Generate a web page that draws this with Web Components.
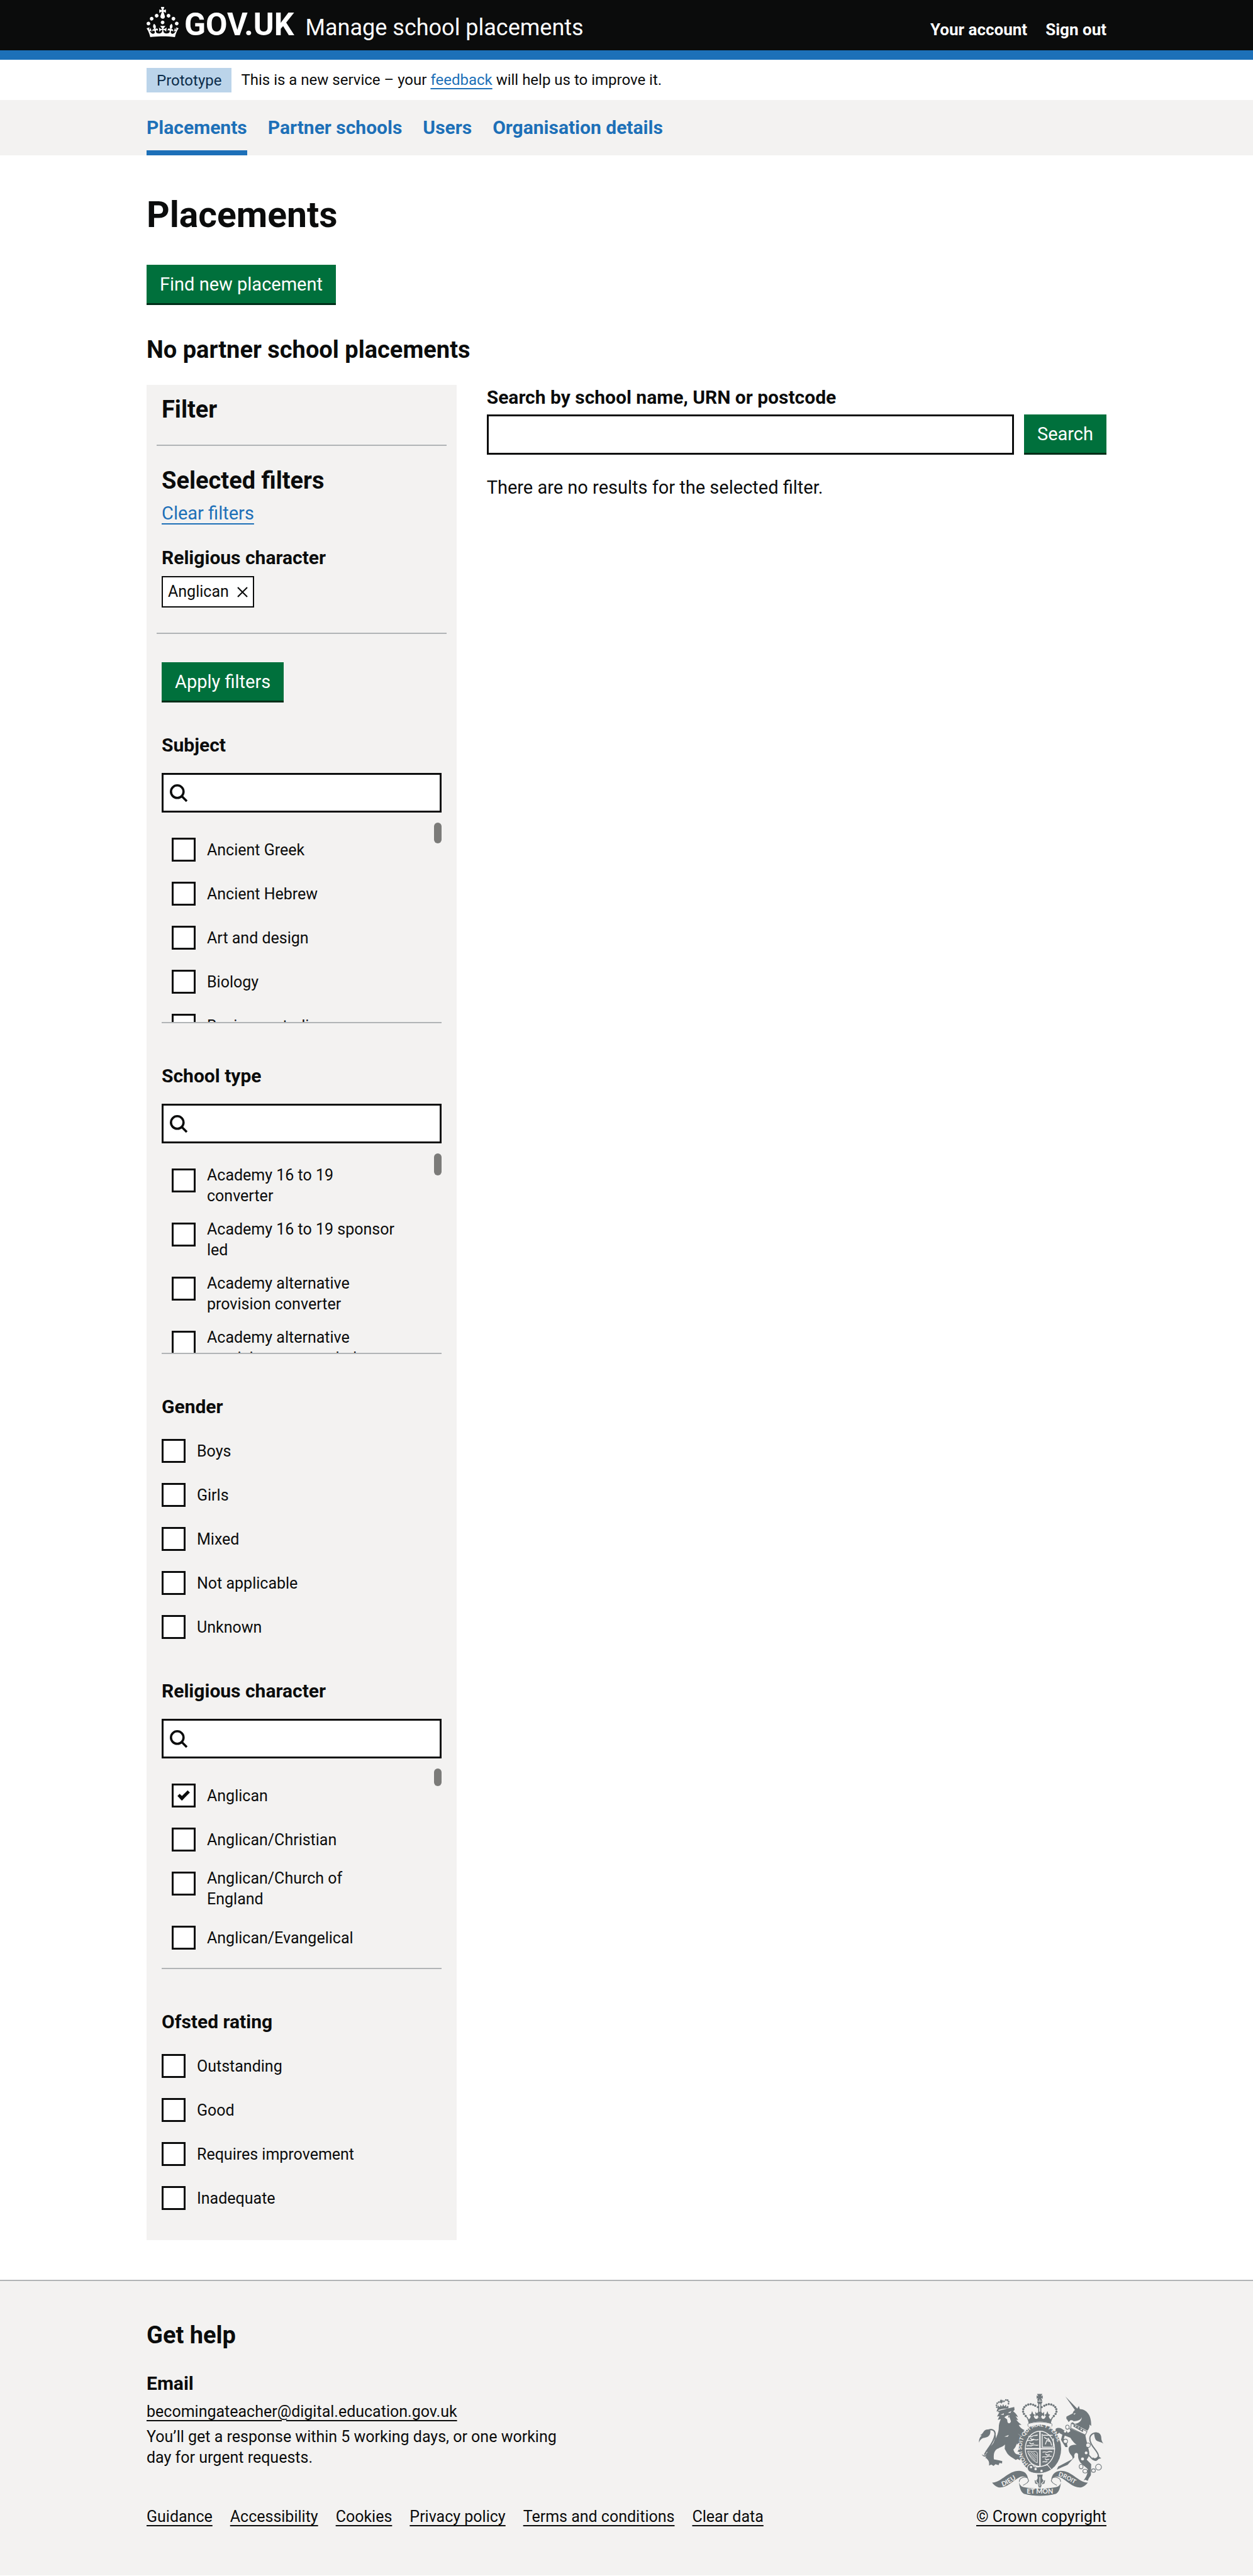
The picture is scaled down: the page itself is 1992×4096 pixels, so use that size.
<!DOCTYPE html>
<html lang="en">
<head>
<meta charset="utf-8">
<title>Placements - Manage school placements</title>
<meta name="viewport" content="width=device-width, initial-scale=1">
<style>
  :root {
    --ink: #0b0c0c;
    --blue: #1d70b8;
    --grey: #f3f2f1;
    --line: #b1b4b6;
    --small: 25px;
    --body: 29px;
    --strong: 30px;
    --heading: 38px;
    --page: min(1526px, 100% - 60px);
  }
  body {
    margin: 0;
    background: #fff;
    color: var(--ink);
    font-family: Roboto, "Liberation Sans", sans-serif;
    font-size: var(--body);
    line-height: 32px;
  }
</style>
</head>
<body>
<app-header service="Manage school placements">
  <header-link>Your account</header-link>
  <header-link>Sign out</header-link>
</app-header>
<phase-banner phase="Prototype"></phase-banner>
<primary-nav>
  <nav-link current>Placements</nav-link>
  <nav-link>Partner schools</nav-link>
  <nav-link>Users</nav-link>
  <nav-link>Organisation details</nav-link>
</primary-nav>
<placements-page>
  <filter-panel slot="filters">
    <filter-group name="Subject" search thumb="33">
      <check-item>Ancient Greek</check-item>
      <check-item>Ancient Hebrew</check-item>
      <check-item>Art and design</check-item>
      <check-item>Biology</check-item>
      <check-item>Business studies</check-item>
    </filter-group>
    <filter-group name="School type" search thumb="35">
      <check-item>Academy 16 to 19 converter</check-item>
      <check-item>Academy 16 to 19 sponsor led</check-item>
      <check-item>Academy alternative provision converter</check-item>
      <check-item>Academy alternative provision sponsor led</check-item>
    </filter-group>
    <filter-group name="Gender">
      <check-item>Boys</check-item>
      <check-item>Girls</check-item>
      <check-item>Mixed</check-item>
      <check-item>Not applicable</check-item>
      <check-item>Unknown</check-item>
    </filter-group>
    <filter-group name="Religious character" search thumb="28">
      <check-item checked>Anglican</check-item>
      <check-item>Anglican/Christian</check-item>
      <check-item>Anglican/Church of England</check-item>
      <check-item>Anglican/Evangelical</check-item>
    </filter-group>
    <filter-group name="Ofsted rating">
      <check-item>Outstanding</check-item>
      <check-item>Good</check-item>
      <check-item>Requires improvement</check-item>
      <check-item>Inadequate</check-item>
    </filter-group>
  </filter-panel>
  <search-results slot="results">There are no results for the selected filter.</search-results>
</placements-page>
<app-footer>
  <footer-link>Guidance</footer-link>
  <footer-link>Accessibility</footer-link>
  <footer-link>Cookies</footer-link>
  <footer-link>Privacy policy</footer-link>
  <footer-link>Terms and conditions</footer-link>
  <footer-link>Clear data</footer-link>
</app-footer>

<script>
const base = `*,*::before,*::after{box-sizing:border-box}h1,h2,h3,p{margin:0}`;
const define = (name, css, html) => customElements.define(name, class extends HTMLElement {
  constructor() {
    super();
    const root = this.attachShadow({ mode: 'open' });
    const t = document.createElement('template');
    t.innerHTML = `<style>${base}${css}</style>${typeof html === 'function' ? html(this) : html}`;
    root.append(t.content.cloneNode(true));
  }
});

/* Green action button */
define('action-button', `
  :host{display:inline-block}
  button{display:block;height:64px;padding:0 21px 3px;border:0;border-radius:0;background:#00703c;color:#fff;
    box-shadow:inset 0 -3px 0 #002d18;font:inherit;font-size:var(--body);line-height:32px;white-space:nowrap;cursor:pointer}
`, `<button type="button"><slot></slot></button>`);

define('crown-icon', `:host{display:block}svg{display:block}`, `
<svg width="51" height="48" viewBox="0 0 32 30" fill="#fff" aria-hidden="true"><path d="M22.6 10.4c-1 .4-2-.1-2.4-1-.4-.9.1-2 1-2.4.9-.4 2 .1 2.4 1s-.1 2-1 2.4m-5.9 6.7c-.9.4-2-.1-2.4-1-.4-.9.1-2 1-2.4.9-.4 2 .1 2.4 1s-.1 2-1 2.4m10.8-3.7c-1 .4-2-.1-2.4-1-.4-.9.1-2 1-2.4.9-.4 2 .1 2.4 1s0 2-1 2.4m3.3 4.8c-1 .4-2-.1-2.4-1-.4-.9.1-2 1-2.4.9-.4 2 .1 2.4 1s-.1 2-1 2.4M17 4.7l2.3 1.2V2.5l-2.3.7-.2-.2.9-3h-3.4l.9 3-.2.2c-.1.1-2.3-.7-2.3-.7v3.4L15 4.7c.1.1.1.2.2.2l-1.3 4c-.1.2-.1.4-.1.6 0 1.1.8 2 1.9 2.2h.7c1-.2 1.9-1.1 1.9-2.1 0-.2 0-.4-.1-.6l-1.3-4c-.1-.2 0-.2.1-.3m-7.6 5.7c.9.4 2-.1 2.4-1 .4-.9-.1-2-1-2.4-.9-.4-2 .1-2.4 1s0 2 1 2.4m-5 3c.9.4 2-.1 2.4-1 .4-.9-.1-2-1-2.4-.9-.4-2 .1-2.4 1s.1 2 1 2.4m-3.2 4.8c.9.4 2-.1 2.4-1 .4-.9-.1-2-1-2.4-.9-.4-2 .1-2.4 1s0 2 1 2.4m14.8 11c4.4 0 8.6.3 12.3.8 1.1-4.5 2.4-7 3.7-8.8l-2.5-.9c.2 1.3.3 1.9 0 2.7-.4-.4-.8-1.1-1.1-2.3l-1.2 4c.7-.5 1.3-.8 2-.9-1.1 2.5-2.6 3.1-3.5 3-1.1-.2-1.7-1.2-1.5-2.1.3-1.2 1.5-1.5 2.1-.1 1.1-2.3-.8-3-2-2.3 1.9-1.9 2.1-3.5.6-5.6-2.1 1.6-2.1 3.2-1.2 5.5-1.2-1.4-3.2-.6-2.5 1.6.9-1.4 2.1-.5 1.9.8-.2 1.1-1.7 2.1-3.5 1.9-2.7-.2-2.9-2.1-2.9-3.6.7-.1 1.9.5 2.9 1.9l.4-4.3c-1.1 1.1-2.1 1.4-3.2 1.4.4-1.2 2.1-3 2.1-3h-5.4s1.7 1.9 2.1 3c-1.1 0-2.1-.2-3.2-1.4l.4 4.3c1-1.4 2.2-2 2.9-1.9-.1 1.5-.2 3.4-2.9 3.6-1.9.2-3.4-.8-3.5-1.9-.2-1.3 1-2.2 1.9-.8.7-2.3-1.2-3-2.5-1.6.9-2.2.9-3.9-1.2-5.5-1.5 2-1.3 3.7.6 5.6-1.2-.7-3.1 0-2 2.3.6-1.4 1.8-1.1 2.1.1.2.9-.3 1.9-1.5 2.1-.9.2-2.4-.5-3.5-3 .6 0 1.2.3 2 .9l-1.2-4c-.3 1.1-.7 1.9-1.1 2.3-.3-.8-.2-1.4 0-2.7l-2.9.9C1.3 23 2.6 25.5 3.7 30c3.7-.5 7.9-.8 12.3-.8"/></svg>`);

define('header-link', `:host{display:block}a{color:inherit;text-decoration:none}`, `<a href="#"><slot></slot></a>`);

define('app-header', `
  :host{display:block;background:var(--ink);color:#fff;border-bottom:15px solid var(--blue)}
  .row{display:flex;align-items:baseline;width:var(--page);height:80px;margin:0 auto;padding-top:11px}
  crown-icon{align-self:flex-start;margin-right:9px}
  .logo{font-size:50px;line-height:56px;font-weight:700;color:inherit;text-decoration:none}
  .service{margin-left:18px;font-size:36px;color:inherit;text-decoration:none}
  nav{display:flex;gap:29px;margin-left:auto;font-size:26px;font-weight:700}
`, el => `<header class="row"><crown-icon></crown-icon><a class="logo" href="#">GOV.UK</a>
  <a class="service" href="#">${el.getAttribute('service')}</a><nav aria-label="Account"><slot></slot></nav></header>`);

define('phase-banner', `
  :host{display:block}
  .row{display:flex;align-items:center;gap:15px;width:var(--page);min-height:64px;margin:0 auto;font-size:24px}
  strong{padding:4px 16px 3px;background:#bbd4ea;color:#0c2d4a;font-weight:400}
  a{color:var(--blue);text-underline-offset:5px;text-decoration-thickness:2px}
`, el => `<div class="row"><strong>${el.getAttribute('phase')}</strong><p>This is a new service – your <a href="#">feedback</a> will help us to improve it.</p></div>`);

define('nav-link', `
  :host{display:block}
  a{display:block;padding:28px 0 20px;border-bottom:8px solid transparent;color:var(--blue);font-size:var(--strong);font-weight:700;text-decoration:none}
  :host([current]) a{border-color:var(--blue)}
`, `<a href="#"><slot></slot></a>`);

define('primary-nav', `
  :host{display:block;background:var(--grey)}
  nav{display:flex;gap:33px;width:var(--page);margin:0 auto}
`, `<nav aria-label="Primary"><slot></slot></nav>`);

define('placements-page', `
  :host{display:block;width:var(--page);margin:0 auto;padding:65px 0 63px}
  h1{font-size:57px;line-height:60px}
  action-button{display:block;width:max-content;margin:49px 0 51px}
  h2{font-size:var(--heading);line-height:40px}
  .columns{display:grid;grid-template-columns:1fr 2fr;gap:48px;align-items:start;margin-top:36px}
`, `<main><h1>Placements</h1><action-button>Find new placement</action-button><h2>No partner school placements</h2>
  <div class="columns"><slot name="filters"></slot><slot name="results"></slot></div></main>`);

define('filter-panel', `
  :host{display:block;padding:19px 16px 42px;background:var(--grey)}
  section,.groups{padding:0 8px}
  h2{font-size:var(--heading);line-height:40px}
  .title{padding-bottom:36px}
  .selected{padding-top:35px;padding-bottom:40px;border:solid var(--line);border-width:2px 0}
  .clear{display:block;width:max-content;margin:16px 0 39px;color:var(--blue);text-underline-offset:6px;text-decoration-thickness:2px}
  h3{font-size:var(--strong)}
  .tag{display:flex;align-items:center;gap:13px;height:50px;margin-top:13px;padding:0 8px;border:2px solid var(--ink);border-radius:0;
    background:#fff;color:var(--ink);font:inherit;font-size:var(--small);cursor:pointer}
  .groups{display:flex;flex-direction:column;padding-top:45px}
  action-button{align-self:flex-start;margin-bottom:52px}
`, `<section class="title"><h2>Filter</h2></section>
  <section class="selected"><h2>Selected filters</h2><a class="clear" href="#">Clear filters</a><h3>Religious character</h3>
  <button class="tag" type="button">Anglican<svg width="17" height="17" viewBox="0 0 17 17" fill="none" stroke="#0b0c0c" stroke-width="2.2" aria-hidden="true"><path d="M1 1l15 15M16 1L1 16"/></svg></button></section>
  <div class="groups"><action-button>Apply filters</action-button><slot></slot></div>`);

define('filter-group', `
  :host{display:block;margin-bottom:61px}
  :host([search]){margin-bottom:68px}
  :host(:last-child){margin-bottom:0}
  fieldset{min-width:0;margin:0;padding:0;border:0}
  legend{display:block;padding:0 0 29px;font-size:var(--strong);font-weight:700;line-height:32px}
  :host([search]) legend{padding-bottom:28px}
  .find{display:flex;align-items:center;height:63px;padding:0 10px;border:3px solid var(--ink);background:#fff}
  .find svg{flex:none;display:block}
  .find input{flex:1;min-width:0;height:57px;margin-left:8px;border:0;outline:0;background:none;font:inherit}
  .scroll{display:flex;height:319px;margin-top:16px;border-bottom:2px solid var(--line)}
  .list{display:flex;flex-direction:column;gap:20px}
  .scroll .list{flex:1;padding:18px 0 0 16px;overflow-y:auto;scrollbar-width:none}
  .thumb{flex:none;width:12px;border-radius:6px;background:#7b7b79}
`, el => {
  const name = el.getAttribute('name');
  const list = `<div class="list"><slot></slot></div>`;
  return `<fieldset><legend>${name}</legend>${el.hasAttribute('search') ? `
    <div class="find"><svg width="28" height="28" viewBox="0 0 28 28" fill="none" stroke="#0b0c0c" stroke-width="3.6" aria-hidden="true"><circle cx="11.8" cy="11.8" r="10"/><path d="M19 19l8 8"/></svg>
    <input type="search" aria-label="Search ${name}"></div>
    <div class="scroll">${list}<div class="thumb" style="height:${el.getAttribute('thumb')}px"></div></div>` : list}</fieldset>`;
});

define('check-item', `
  :host{display:flex;flex:none;align-items:flex-start;min-height:50px;font-size:var(--small);line-height:33px}
  input{appearance:none;display:grid;place-content:center;flex:none;width:38px;height:38px;margin:6px 18px 0 0;border:3px solid var(--ink);border-radius:0;background:#fff}
  input:checked::before{content:"";width:18px;height:10px;margin-bottom:5px;border:solid var(--ink);border-width:0 0 5px 5px;transform:rotate(-45deg)}
  label{display:flex;align-items:center;min-height:50px;max-width:302px}
`, el => `<input type="checkbox" id="box"${el.hasAttribute('checked') ? ' checked' : ''}><label for="box"><span><slot></slot></span></label>`);

define('search-results', `
  :host{display:block;padding-top:4px}
  label{display:block;font-size:var(--strong);font-weight:700}
  .row{display:flex;gap:16px;margin:11px 0 36px}
  input{flex:1;min-width:0;height:64px;padding:0 12px;border:3px solid var(--ink);border-radius:0;background:#fff;font:inherit}
`, `<label for="q">Search by school name, URN or postcode</label>
  <div class="row"><input id="q" type="text"><action-button>Search</action-button></div><p><slot></slot></p>`);

/* Royal coat of arms */
const dots = (pts, r) => pts.map(([x, y]) => `<circle cx="${x}" cy="${y}" r="${r}"/>`).join('');
define('royal-arms', `:host{display:block}svg{display:block}text{font-family:Lato,sans-serif;font-weight:700}`, `
<svg width="199" height="163" viewBox="102 80 718 590" fill="#6f777b" aria-hidden="true">
  <g>
    ${dots([[205,158],[203,147],[207,136],[216,129],[226,128],[246,124],[257,117],[267,118],[273,127],[272,138]], 5)}
    <path d="M217 173l-8-25 14 9 3-14 9 12 7-15 5 14 11-11 1 14 12-8 1 16c-18 0-38 3-55 8zM228 110l4 8 8-2-2 8 6 5-9 2-3 8-5-8-8-1 6-6-3-8 6 2z"/>
    <path d="M203 183c30-10 65-18 102-26l2 16-8 9c10 6 20 16 28 34l-14-7 15 24-12-4c10 14 19 22 31 30l-16 1c6 14 18 24 36 31l-9 4 12 14-24 16-22-16 40 34c4 16 3 30 8 42l-7 29-10 14-9-11-6 10-8-13-8 2 8-19 10-13-12-20-9 10-3-16-13 8-4-16-12 2-3-13-24-3 12-18-26 10c20 0 55-2 68 14 12 16-2 48-16 60 6 16 10 26 28 28l16 2 10 8-4 16-12-6 2 14-16-8-10 6-18-12c-30-14-36-36-46-52l2-26c-10 12-30 18-44 26-20 12-22 32-20 60l28 6 20 4-1 14-15-3-5 13-18-6-11 10-13-8-13 6c3-22-4-32-16-42l4-16-9-5 12-14-9-8 14-9-2-7c16-10 26-18 34-34 16-30 28-56 28-84 0-16 4-30 12-48l-18 4 10-22-14 3 14-26-10 1 12-28-12 0 10-26z"/>
    <g fill="#f3f2f1"><path d="M226 201l20-8-2 9zM268 190l20-10-5 11z"/><path d="M248 216c10-8 18-14 30-10-2 12 6 22 8 34-4 14-18 14-20 2l-2-14z"/></g>
    <path d="M272 205l8 9-10 4z"/>
    <path d="M134 432c20-42 52-64 60-112 6-34-26-42-46-22" fill="none" stroke="#6f777b" stroke-width="8"/>
    <path d="M152 438c24-46 48-76 44-118" fill="none" stroke="#6f777b" stroke-width="6"/>
    <path d="M168 292c2 30-16 40-34 42-16 2-26 12-32 28 0-24 8-34 16-40l-9-3c10-4 14-12 20-20 8-12 22-18 39-7zM118 428c12 12 30 8 42-4l20-12c-2 24-22 36-42 40l6-10c-12 2-22-2-26-14z"/>
  </g>
  <g>
    <path d="M599 96l70 72-14 7zM606 212l35-18c4-14 14-22 26-26l10-17 5 18c36 2 68 30 66 97l-10-8c2 16-4 26-12 36l-72-38-24 4c4-10 12-16 16-24l-16-4-12 12-8-14c-6-4-6-10-4-18z"/>
    <path d="M645 196l14-4-7 9zM634 240c24-2 50 0 60-24-2 22-14 34-40 38z" fill="#f3f2f1"/>
    <path d="M634 250l90 48-10 20-84-40z" fill="#f3f2f1" stroke="#6f777b" stroke-width="4"/>
    <path d="M644 268l8-12 6 18 12-12 2 20 14-12 2 22 14-8-2 18z"/>
    <path d="M622 278l92 40c6 34 16 66 22 96 4 24-6 34-14 46l26 26-2 64-12 18-6 14-14-6-10 4c12-18 24-32 24-66-20-20-44-30-52-56-8-24 2-30-10-36-14-4-18 16-14 24l-40 44-34 14-28 14 8-18 38-20 44-24c6-20-20-24-22-54-2-22 20-28 46-28-14-8-26-24-36-40l-32-12-6 18 18 24 4 24-12 0-10-16-16-26 8-30-16-8-6-24 40 8c6 2 10 8 14 14l14-10z"/>
    <path d="M544 282c14-10 38-4 48 12l-6 24c-12-8-14-16-22-14l-12 12-12-16z"/>
    <path d="M728 428c14 12 22 30 38 34 22 4 30-18 18-40-16-28-46-52-44-86 2-20 26-38 46-26" fill="none" stroke="#6f777b" stroke-width="7"/>
    <path d="M764 308c20-12 42 2 42 26 0 12 4 22 12 34-14-10-30-10-40-18-10-10-10-24-14-42zM756 446c12 12 24 4 30-8l20 14-16 4-14 12-20-8z"/>
    <g fill="#f3f2f1" stroke="#6f777b" stroke-width="4"><ellipse cx="611" cy="273" rx="10" ry="12"/><circle cx="600" cy="354" r="12"/><circle cx="730" cy="377" r="13"/><ellipse cx="690" cy="500" rx="11" ry="13"/><ellipse cx="713" cy="526" rx="13" ry="11"/><ellipse cx="761" cy="523" rx="11" ry="10"/><circle cx="790" cy="503" r="17"/></g>
    <g fill="#f3f2f1"><circle cx="719" cy="421" r="8"/><circle cx="698" cy="456" r="9"/><circle cx="598" cy="297" r="7"/></g>
  </g>
  <g>
    ${dots([[371,209],[361,197],[356,184],[357,170],[363,158],[373,149],[386,143],[400,141],[414,144],[426,150],[478,150],[490,144],[504,141],[518,143],[531,149],[541,158],[547,170],[548,184],[543,197],[533,209],[441,158],[463,158]], 6.5)}
    <path d="M436 82h31l-8 14 10-6v20l-10-6 6 12h-28l6-12-9 6V90l10 6z"/><circle cx="452" cy="126" r="15"/>
    <path d="M436 124h32M452 112v14" stroke="#f3f2f1" stroke-width="3"/>
    <path d="M443 136h18v50l8 8 8-10v28l-10-8-8 10 6 6h-26l6-6-8-10-10 8v-28l8 10 8-8z"/><path d="M452 140v44" stroke="#f3f2f1" stroke-width="6"/>
    <path d="M388 252c-2-18-8-30-18-42l12 6 6 12c8-6 10-8 12-18l-8-8 10-4 6-18 7 18 10 4-8 8c6 16 16 20 25 10h20c9 10 19 6 25-10l-8-8 10-4 7-18 6 18 10 4-8 8c2 10 4 12 12 18l6-12 12-6c-10 12-16 24-18 42-42-14-86-14-128 0z"/>
    <path d="M384 254c40-14 96-14 138 0 2 8 0 14-6 20-38-14-88-14-126 0-6-6-8-12-6-20z" fill="#f3f2f1" stroke="#6f777b" stroke-width="3"/>
    <ellipse cx="453" cy="398" rx="122" ry="140"/><ellipse cx="453" cy="398" rx="87" ry="104" fill="#f3f2f1"/><ellipse cx="453" cy="398" rx="82" ry="99"/>
    <path d="M453 298v200M370 397h166" stroke="#f3f2f1" stroke-width="8"/>
    <g fill="none" stroke="#f3f2f1" stroke-width="5"><path d="M386 328c8-8 14 6 22-2s16-2 32-8M380 352c14-10 18 6 30-4s18 4 34-4M376 382c14-8 20 4 32-4s20 4 36-2M398 334l6 10 14-2M392 362l10 8 16-4M470 320h56M466 312v76h64v-50M478 330c10 16 26 6 34 26l-20-6-8 22M500 336l16 26 4 16M468 418c14-8 18 4 30-2s16-4 26 0M466 446c14-8 20 4 30-4s16 2 24-2M468 474c12-8 16 4 28-4M484 426l10 8 16-4M482 454l8 8 16-4"/><path d="M382 412c14-2 24 6 34 2s18 0 22 8v56c-24-8-44-30-56-66zM392 418l38 44M404 418l28 32M416 420l18 20M386 424l40 44" stroke-width="3.5"/></g>
    <path d="M382 500c10-18 28-18 34-4 4 10 40 8 80-6l24 28c-40 24-90 30-130 10-8-8-12-18-8-28z" stroke="#f3f2f1" stroke-width="4"/>
    <g fill="#f3f2f1"><circle cx="402" cy="503" r="7"/><circle cx="428" cy="514" r="7"/><circle cx="462" cy="525" r="7"/></g>
    <path id="garter" d="M385 484A104 122 0 1 1 521 484" fill="none"/>
    <text font-size="31" fill="#f3f2f1"><textPath href="#garter">HONI SOIT QUI MAL Y PENSE</textPath></text>
    <path d="M437 546h32l-4 20c4 8 6 10 8 16l10-4-4 20-16 4-4 18h-13l-4-18-16-4-4-20 10 4c2-6 6-10 8-16z"/>
    <path d="M452 560v54M430 582c0 12 14 10 14 22M474 582c0 12-14 10-14 22" fill="none" stroke="#f3f2f1" stroke-width="4"/>
  </g>
  <path d="M334 588c0-24 30-32 48-22l6 16c-10 18-20 18-32 26M572 588c0-24-30-32-48-22l-6 16c10 18 20 18 32 26" fill="#f3f2f1" stroke="#6f777b" stroke-width="4"/>
  <path d="M178 592c60-4 90-70 158-68 30 2 46 20 48 46-14-14-34-16-50-8-38 20-70 60-114 58-18-2-32-14-42-28zM728 592c-60-4-90-70-158-68-30 2-46 20-52 48 14-14 38-18 54-10 38 20 70 60 114 58 18-2 32-14 42-28z"/>
  <path d="M332 590c6 16 12 24 28 28 60 12 124 12 184 0 18-4 26-12 30-28-4 30-10 54-28 66-60 16-126 16-186 0-18-12-24-36-28-66z"/>
  <path id="left" d="M238 614C272 606 300 576 340 560" fill="none"/><path id="right" d="M558 554C596 560 634 596 688 616" fill="none"/>
  <g fill="#f3f2f1" font-size="38"><text><textPath href="#left">DIEU</textPath></text><text font-size="34"><textPath href="#right">DROIT</textPath></text>
  <text x="453" y="657" font-size="39" text-anchor="middle">ET MON</text></g>
</svg>`);

define('footer-link', `:host{display:block}a{color:inherit;text-underline-offset:5px;text-decoration-thickness:2px}`, `<a href="#"><slot></slot></a>`);

define('app-footer', `
  :host{display:block;border-top:2px solid var(--line);background:var(--grey);font-size:var(--small);line-height:33px}
  footer{display:flex;justify-content:space-between;align-items:flex-end;width:var(--page);margin:0 auto;padding:66px 0 77px}
  h2{font-size:var(--heading);line-height:40px}
  h3{margin:41px 0 12px;font-size:var(--strong);line-height:32px}
  p{max-width:670px;margin:7px 0 61px}
  nav{display:flex;gap:28px}
  .arms{display:flex;flex-direction:column;align-items:center;gap:16px}
`, `<footer><div><h2>Get help</h2><h3>Email</h3><footer-link>becomingateacher@digital.education.gov.uk</footer-link>
  <p>You’ll get a response within 5 working days, or one working day for urgent requests.</p>
  <nav aria-label="Support links"><slot></slot></nav></div>
  <div class="arms"><royal-arms></royal-arms><footer-link>© Crown copyright</footer-link></div></footer>`);
</script>
</body>
</html>
